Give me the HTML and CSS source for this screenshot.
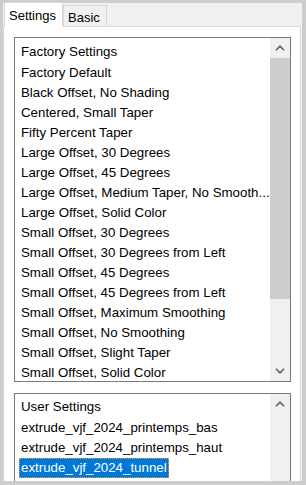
FILE: index.html
```html
<!DOCTYPE html>
<html lang="en">
<head>
  <meta charset="UTF-8">
  <title>Extrude Presets</title>
  <link rel="stylesheet" href="styles.css">
</head>
<body>

<div class="window">
  <div class="tabs">
    <div class="tab active">Settings</div>
    <div class="tab">Basic</div>
  </div>

  <div class="panel">
    <!-- Factory presets -->
    <div class="listbox factory">
      <div class="items">
        <div class="item head">Factory Settings</div>
        <div class="item">Factory Default</div>
        <div class="item">Black Offset, No Shading</div>
        <div class="item">Centered, Small Taper</div>
        <div class="item">Fifty Percent Taper</div>
        <div class="item">Large Offset, 30 Degrees</div>
        <div class="item">Large Offset, 45 Degrees</div>
        <div class="item">Large Offset, Medium Taper, No Smooth...</div>
        <div class="item">Large Offset, Solid Color</div>
        <div class="item">Small Offset, 30 Degrees</div>
        <div class="item">Small Offset, 30 Degrees from Left</div>
        <div class="item">Small Offset, 45 Degrees</div>
        <div class="item">Small Offset, 45 Degrees from Left</div>
        <div class="item">Small Offset, Maximum Smoothing</div>
        <div class="item">Small Offset, No Smoothing</div>
        <div class="item">Small Offset, Slight Taper</div>
        <div class="item">Small Offset, Solid Color</div>
      </div>
      <div class="scrollbar">
        <div class="sb-btn">
          <svg width="10" height="6" viewBox="0 0 10 6"><path d="M1 5.2 L5 1.2 L9 5.2" fill="none" stroke="#606060" stroke-width="1.6"/></svg>
        </div>
        <div class="sb-thumb"></div>
        <div class="sb-track"></div>
        <div class="sb-btn">
          <svg width="10" height="6" viewBox="0 0 10 6"><path d="M1 0.8 L5 4.8 L9 0.8" fill="none" stroke="#606060" stroke-width="1.6"/></svg>
        </div>
      </div>
    </div>

    <!-- User presets -->
    <div class="listbox user">
      <div class="items">
        <div class="item head">User Settings</div>
        <div class="item">extrude_vjf_2024_printemps_bas</div>
        <div class="item">extrude_vjf_2024_printemps_haut</div>
        <div class="item"><span class="selected">extrude_vjf_2024_tunnel</span></div>
      </div>
      <div class="scrollbar">
        <div class="sb-btn">
          <svg width="10" height="6" viewBox="0 0 10 6"><path d="M1 5.2 L5 1.2 L9 5.2" fill="none" stroke="#606060" stroke-width="1.6"/></svg>
        </div>
        <div class="sb-track"></div>
      </div>
    </div>
  </div>
</div>

</body>
</html>
```

FILE: styles.css
```css
body { margin: 0; background: #cdcdcd; font: 13px "Liberation Sans", Arial, sans-serif; color: #000; }
.window { margin: 3px 4px 0 3px; width: 299px; height: 478px; background: #f0f0f0; display: flex; flex-direction: column; }

.tabs { height: 23px; display: flex; align-items: flex-end; padding-left: 1px; position: relative; z-index: 1; }
.tab { height: 20px; line-height: 23px; padding: 0 6px 0 4px; border: 1px solid #d9d9d9; border-bottom: none; background: #f0f0f0; }
.tab.active { height: 24px; line-height: 25px; margin-bottom: -1px; background: #fff; border-color: #d9d9d9; }

.panel { flex: 1; margin-right: 1px; background: #fff; border: 1px solid #d9d9d9; border-bottom: none; padding: 10px 0 0 10px; overflow: hidden; }

.listbox { width: 275px; border: 1px solid #7a7a7a; display: flex; }
.listbox.factory { height: 343px; margin-bottom: 11px; }
.listbox.user { height: 120px; border-bottom: none; }

.items { flex: 1; overflow: hidden; padding-top: 2px; font-size: 13.3px; }
.item { height: 20px; line-height: 20px; padding-left: 6px; white-space: nowrap; overflow: hidden; }
.item.head { height: 23px; line-height: 23px; }
.user .items { padding-top: 1px; }
.selected { display: inline-block; height: 20px; margin-left: -2px; padding: 0 2px; background: #0078d7; color: #fff; outline: 1px dotted #f0a030; outline-offset: -1px; }

.scrollbar { width: 20px; background: #f0f0f0; display: flex; flex-direction: column; }
.sb-btn { height: 20px; display: flex; align-items: center; justify-content: center; }
.sb-thumb { height: 241px; background: #cdcdcd; }
.sb-track { flex: 1; }
```
